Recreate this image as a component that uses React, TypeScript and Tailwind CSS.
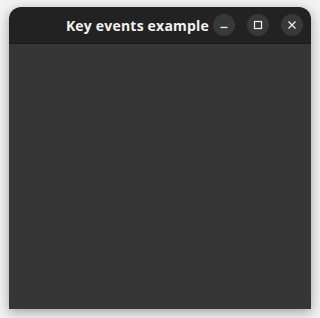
import React from "react";

export default function App() {
  return (
    <div className="w-[320px] h-[318px] bg-[#f2f2f2] pl-[9px] pt-[7px]" style={{ fontFamily: '"Open Sans", "Noto Sans", sans-serif' }}>
      <div className="w-[302px] h-[302px] flex flex-col rounded-t-[12px] overflow-hidden shadow-[0_3px_12px_rgba(0,0,0,0.35)]">
        <div className="h-[37px] bg-[#222222] border-b border-[#181818] flex items-center relative">
          <div className="flex-1 flex justify-end pr-[4px]">
            <span className="text-[#f2f2f2] font-bold text-[14px] tracking-[0.2px]">Key events example</span>
          </div>
          <div className="flex items-center gap-[12px] pr-[8px]">
            <button className="w-[22px] h-[22px] rounded-full bg-[#383838] flex items-center justify-center">
              <svg width="10" height="10" viewBox="0 0 10 10"><rect x="1.5" y="6.8" width="7" height="1.3" fill="#eeeeee" /></svg>
            </button>
            <button className="w-[22px] h-[22px] rounded-full bg-[#383838] flex items-center justify-center">
              <svg width="10" height="10" viewBox="0 0 10 10"><rect x="1.5" y="1.5" width="7" height="7" fill="none" stroke="#eeeeee" strokeWidth="1.2" /></svg>
            </button>
            <button className="w-[22px] h-[22px] rounded-full bg-[#383838] flex items-center justify-center">
              <svg width="10" height="10" viewBox="0 0 10 10"><path d="M1.5 1.5 L8.5 8.5 M8.5 1.5 L1.5 8.5" stroke="#eeeeee" strokeWidth="1.3" /></svg>
            </button>
          </div>
        </div>
        <div className="flex-1 bg-[#363636]" />
      </div>
    </div>
  );
}
